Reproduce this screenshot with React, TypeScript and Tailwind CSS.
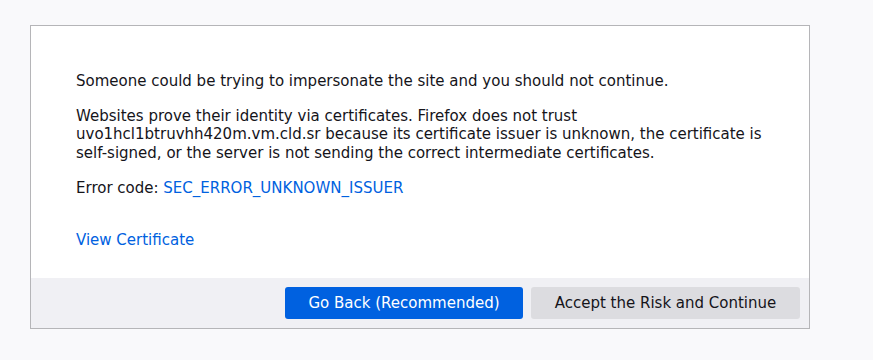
export default function App() {
  return (
    <div
      className="h-[360px] w-full bg-[#f9f9fb] pl-[30px] pt-[25px] text-[#15141a]"
      style={{ fontFamily: '"DejaVu Sans", sans-serif' }}
    >
      <div className="flex h-[304px] w-[780px] flex-col border border-[#b5b5b8] bg-white">
        <div className="flex-1 pl-[45px] pt-[46px] text-[15px] leading-[18.5px]">
          <p>Someone could be trying to impersonate the site and you should not continue.</p>
          <p className="mt-[16px] w-[700px]">
            Websites prove their identity via certificates. Firefox does not trust
            uvo1hcl1btruvhh420m.vm.cld.sr because its certificate issuer is unknown, the certificate is
            self-signed, or the server is not sending the correct intermediate certificates.
          </p>
          <p className="mt-[17px]">
            Error code: <a className="text-[#0061e0]">SEC_ERROR_UNKNOWN_ISSUER</a>
          </p>
          <p className="mt-[33px]">
            <a className="text-[#0061e0]">View Certificate</a>
          </p>
        </div>
        <div className="flex h-[50px] items-start justify-end gap-[8px] bg-[#f0f0f4] pr-[9px] pt-[9px]">
          <button className="h-[32px] w-[238px] rounded-[3px] bg-[#0061e0] text-[15px] text-white">
            Go Back (Recommended)
          </button>
          <button className="h-[32px] w-[269px] rounded-[3px] bg-[#dcdce0] text-[15px] text-[#15141a]">
            Accept the Risk and Continue
          </button>
        </div>
      </div>
    </div>
  );
}
